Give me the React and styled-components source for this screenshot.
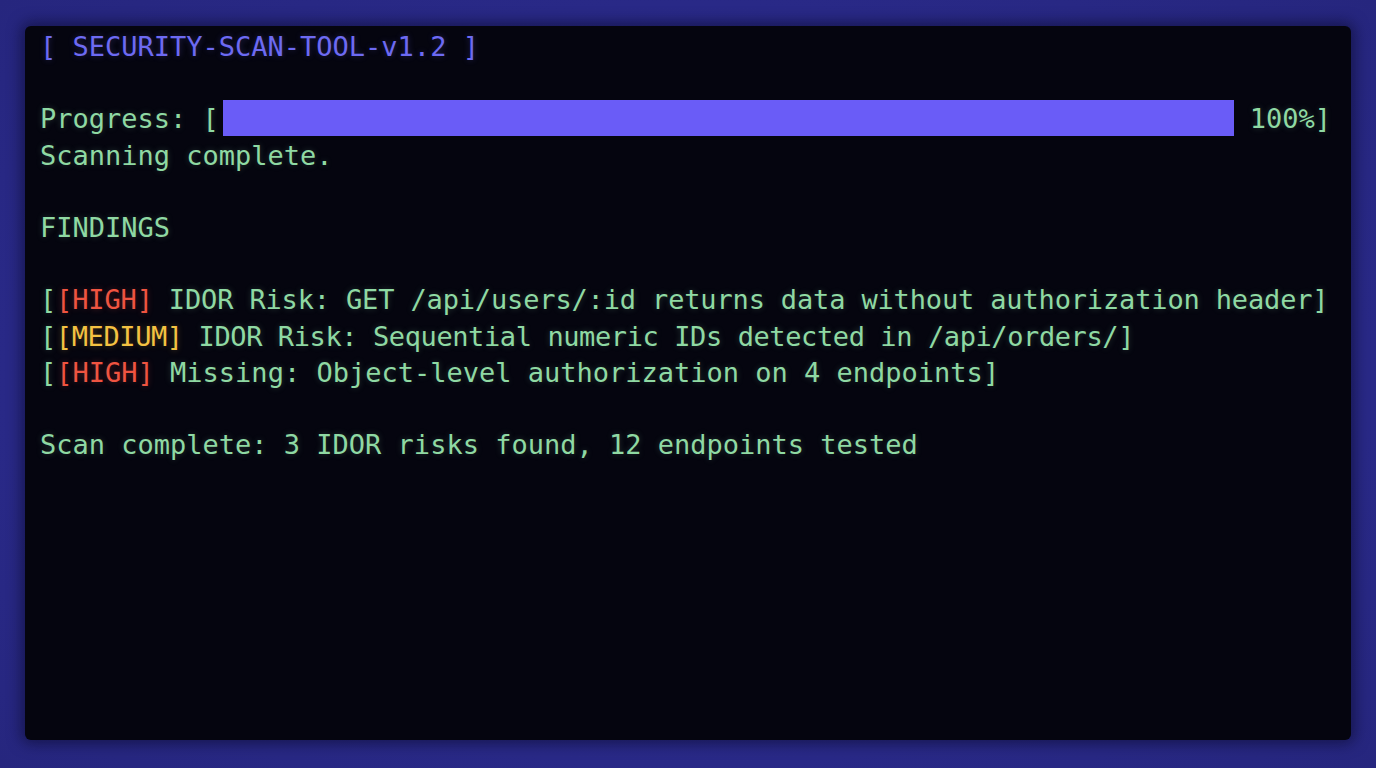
import React from 'react'
import styled, {createGlobalStyle} from 'styled-components'

const GlobalStyle = createGlobalStyle`
  html, body {
    margin: 0;
    padding: 0;
    background: #2a2a8c;
  }
`;

const Page = styled.div`
  width: 1376px;
  height: 768px;
  box-sizing: border-box;
  padding: 26px 25px 28px 25px;
  background: radial-gradient(ellipse at center, #2d2d95 0%, #2a2a8a 60%, #26267e 100%);
`;

const Terminal = styled.div`
  height: 100%;
  box-sizing: border-box;
  padding: 3px 20px 0 15px;
  background: #05050f;
  border-radius: 6px;
  box-shadow: 0 0 14px 4px rgba(10, 10, 40, 0.55);
  font-family: "DejaVu Sans Mono", "Liberation Mono", monospace;
  font-size: 27px;
  line-height: 36.2px;
  color: #8fd9a3;
  text-shadow: 0 0 6px rgba(143, 217, 163, 0.25);
  white-space: pre;
`;

const Line = styled.div`
  height: 36.2px;
  letter-spacing: ${p => p.$tight || 0}px;
`;

const Title = styled(Line)`
  color: #6d6af2;
  text-shadow: 0 0 6px rgba(109, 106, 242, 0.3);
`;

const ProgressRow = styled.div`
  display: flex;
  align-items: center;
  height: 36.2px;
`;

const Bar = styled.div`
  flex: 1;
  height: 36px;
  margin: -2px 16px 0 4px;
  background: #6a5cf7;
`;

const Tag = styled.span`
  color: ${p => p.$level === 'HIGH' ? '#ef5441' : '#f4c242'};
  text-shadow: 0 0 6px ${p => p.$level === 'HIGH' ? 'rgba(239,84,65,0.3)' : 'rgba(244,194,66,0.3)'};
`;

const findings = [
  {level: 'HIGH', tight: -0.15, text: 'IDOR Risk: GET /api/users/:id returns data without authorization header'},
  {level: 'MEDIUM', tight: -0.4, text: 'IDOR Risk: Sequential numeric IDs detected in /api/orders/'},
  {level: 'HIGH', tight: 0, text: 'Missing: Object-level authorization on 4 endpoints'},
];

const App = () => {
  return (
    <Page>
      <GlobalStyle />
      <Terminal>
        <Title>[ SECURITY-SCAN-TOOL-v1.2 ]</Title>
        <Line />
        <ProgressRow>
          <span>Progress: [</span>
          <Bar />
          <span>100%]</span>
        </ProgressRow>
        <Line>Scanning complete.</Line>
        <Line />
        <Line>FINDINGS</Line>
        <Line />
        {findings.map((f, i) => (
          <Line key={i} $tight={f.tight}>
            [<Tag $level={f.level}>[{f.level}]</Tag> {f.text}]
          </Line>
        ))}
        <Line />
        <Line>Scan complete: 3 IDOR risks found, 12 endpoints tested</Line>
      </Terminal>
    </Page>
  )
}

export default App
